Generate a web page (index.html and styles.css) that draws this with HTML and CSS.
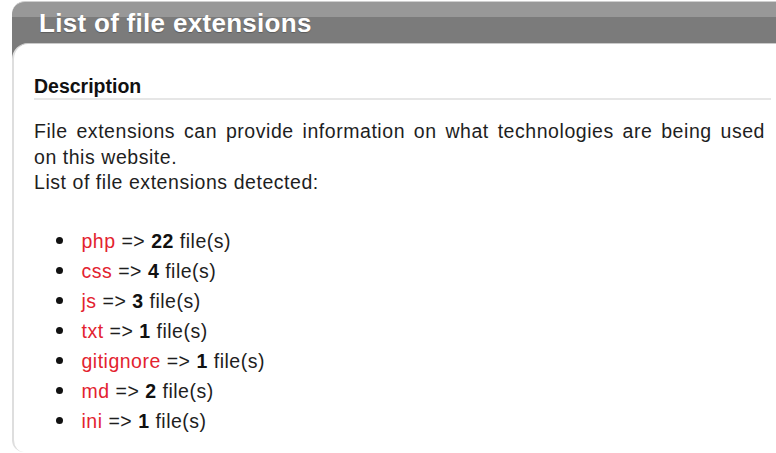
FILE: index.html
```html
<!DOCTYPE html>
<html lang="en">
<head>
<meta charset="utf-8">
<title>List of file extensions</title>
<link rel="stylesheet" href="styles.css">
</head>
<body>
<div class="panel">
  <div class="panel-head">List of file extensions</div>
  <div class="panel-body">
    <h3 class="section-title">Description</h3>
    <p class="desc">File extensions can provide information on what technologies are being used on this website.<br>List of file extensions detected:</p>
    <ul class="ext-list">
      <li><span class="txt"><span class="ext">php</span> =&gt; <b>22</b> file(s)</span></li>
      <li><span class="txt"><span class="ext">css</span> =&gt; <b>4</b> file(s)</span></li>
      <li><span class="txt"><span class="ext">js</span> =&gt; <b>3</b> file(s)</span></li>
      <li><span class="txt"><span class="ext">txt</span> =&gt; <b>1</b> file(s)</span></li>
      <li><span class="txt"><span class="ext">gitignore</span> =&gt; <b>1</b> file(s)</span></li>
      <li><span class="txt"><span class="ext">md</span> =&gt; <b>2</b> file(s)</span></li>
      <li><span class="txt"><span class="ext">ini</span> =&gt; <b>1</b> file(s)</span></li>
    </ul>
  </div>
</div>
</body>
</html>
```

FILE: styles.css
```css
html, body {
  margin: 0;
  padding: 0;
  background: #fff;
}
body {
  font-family: "Liberation Sans", Arial, sans-serif;
  color: #1e1e1e;
  overflow: hidden;
}
.panel {
  margin: 1px 0 0 12px;
  border-top: 1px solid #cfcfcf;
  border-top-left-radius: 13px;
  background: linear-gradient(to bottom, #989898 0, #989898 15px, #7b7b7b 15px, #7b7b7b 70px, #fff 70px);
}
.panel-head {
  height: 35px;
  padding: 6px 0 0 27px;
  font-size: 26px;
  line-height: 30px;
  font-weight: bold;
  letter-spacing: 0.3px;
  color: #fff;
  text-shadow: 0 1px 1px rgba(0, 0, 0, 0.25);
}
.panel-body {
  background: #fff;
  border-top: 1px solid #cacaca;
  border-left: 2px solid #dedede;
  border-top-left-radius: 16px;
  border-bottom-left-radius: 12px;
  padding: 30px 5px 16px 20px;
}
.section-title {
  margin: 0;
  font-size: 19.5px;
  line-height: 24px;
  font-weight: bold;
  color: #111;
  border-bottom: 2px solid #e6e6e6;
}
.desc {
  margin: 19px 6px 0 0;
  font-size: 19.5px;
  line-height: 25.5px;
  letter-spacing: 0.55px;
  text-align: justify;
}
.ext-list {
  list-style: none;
  margin: 30px 0 0 22px;
  padding: 0;
  font-size: 19.5px;
  line-height: 30px;
  letter-spacing: 0.5px;
}
.ext-list li {
  display: flex;
  align-items: center;
  gap: 18.5px;
}
.ext-list li::before {
  content: "";
  flex: none;
  width: 7px;
  height: 7px;
  border-radius: 50%;
  background: #111;
}
.ext {
  color: #e3222f;
}
.ext-list b {
  color: #111;
}
```
